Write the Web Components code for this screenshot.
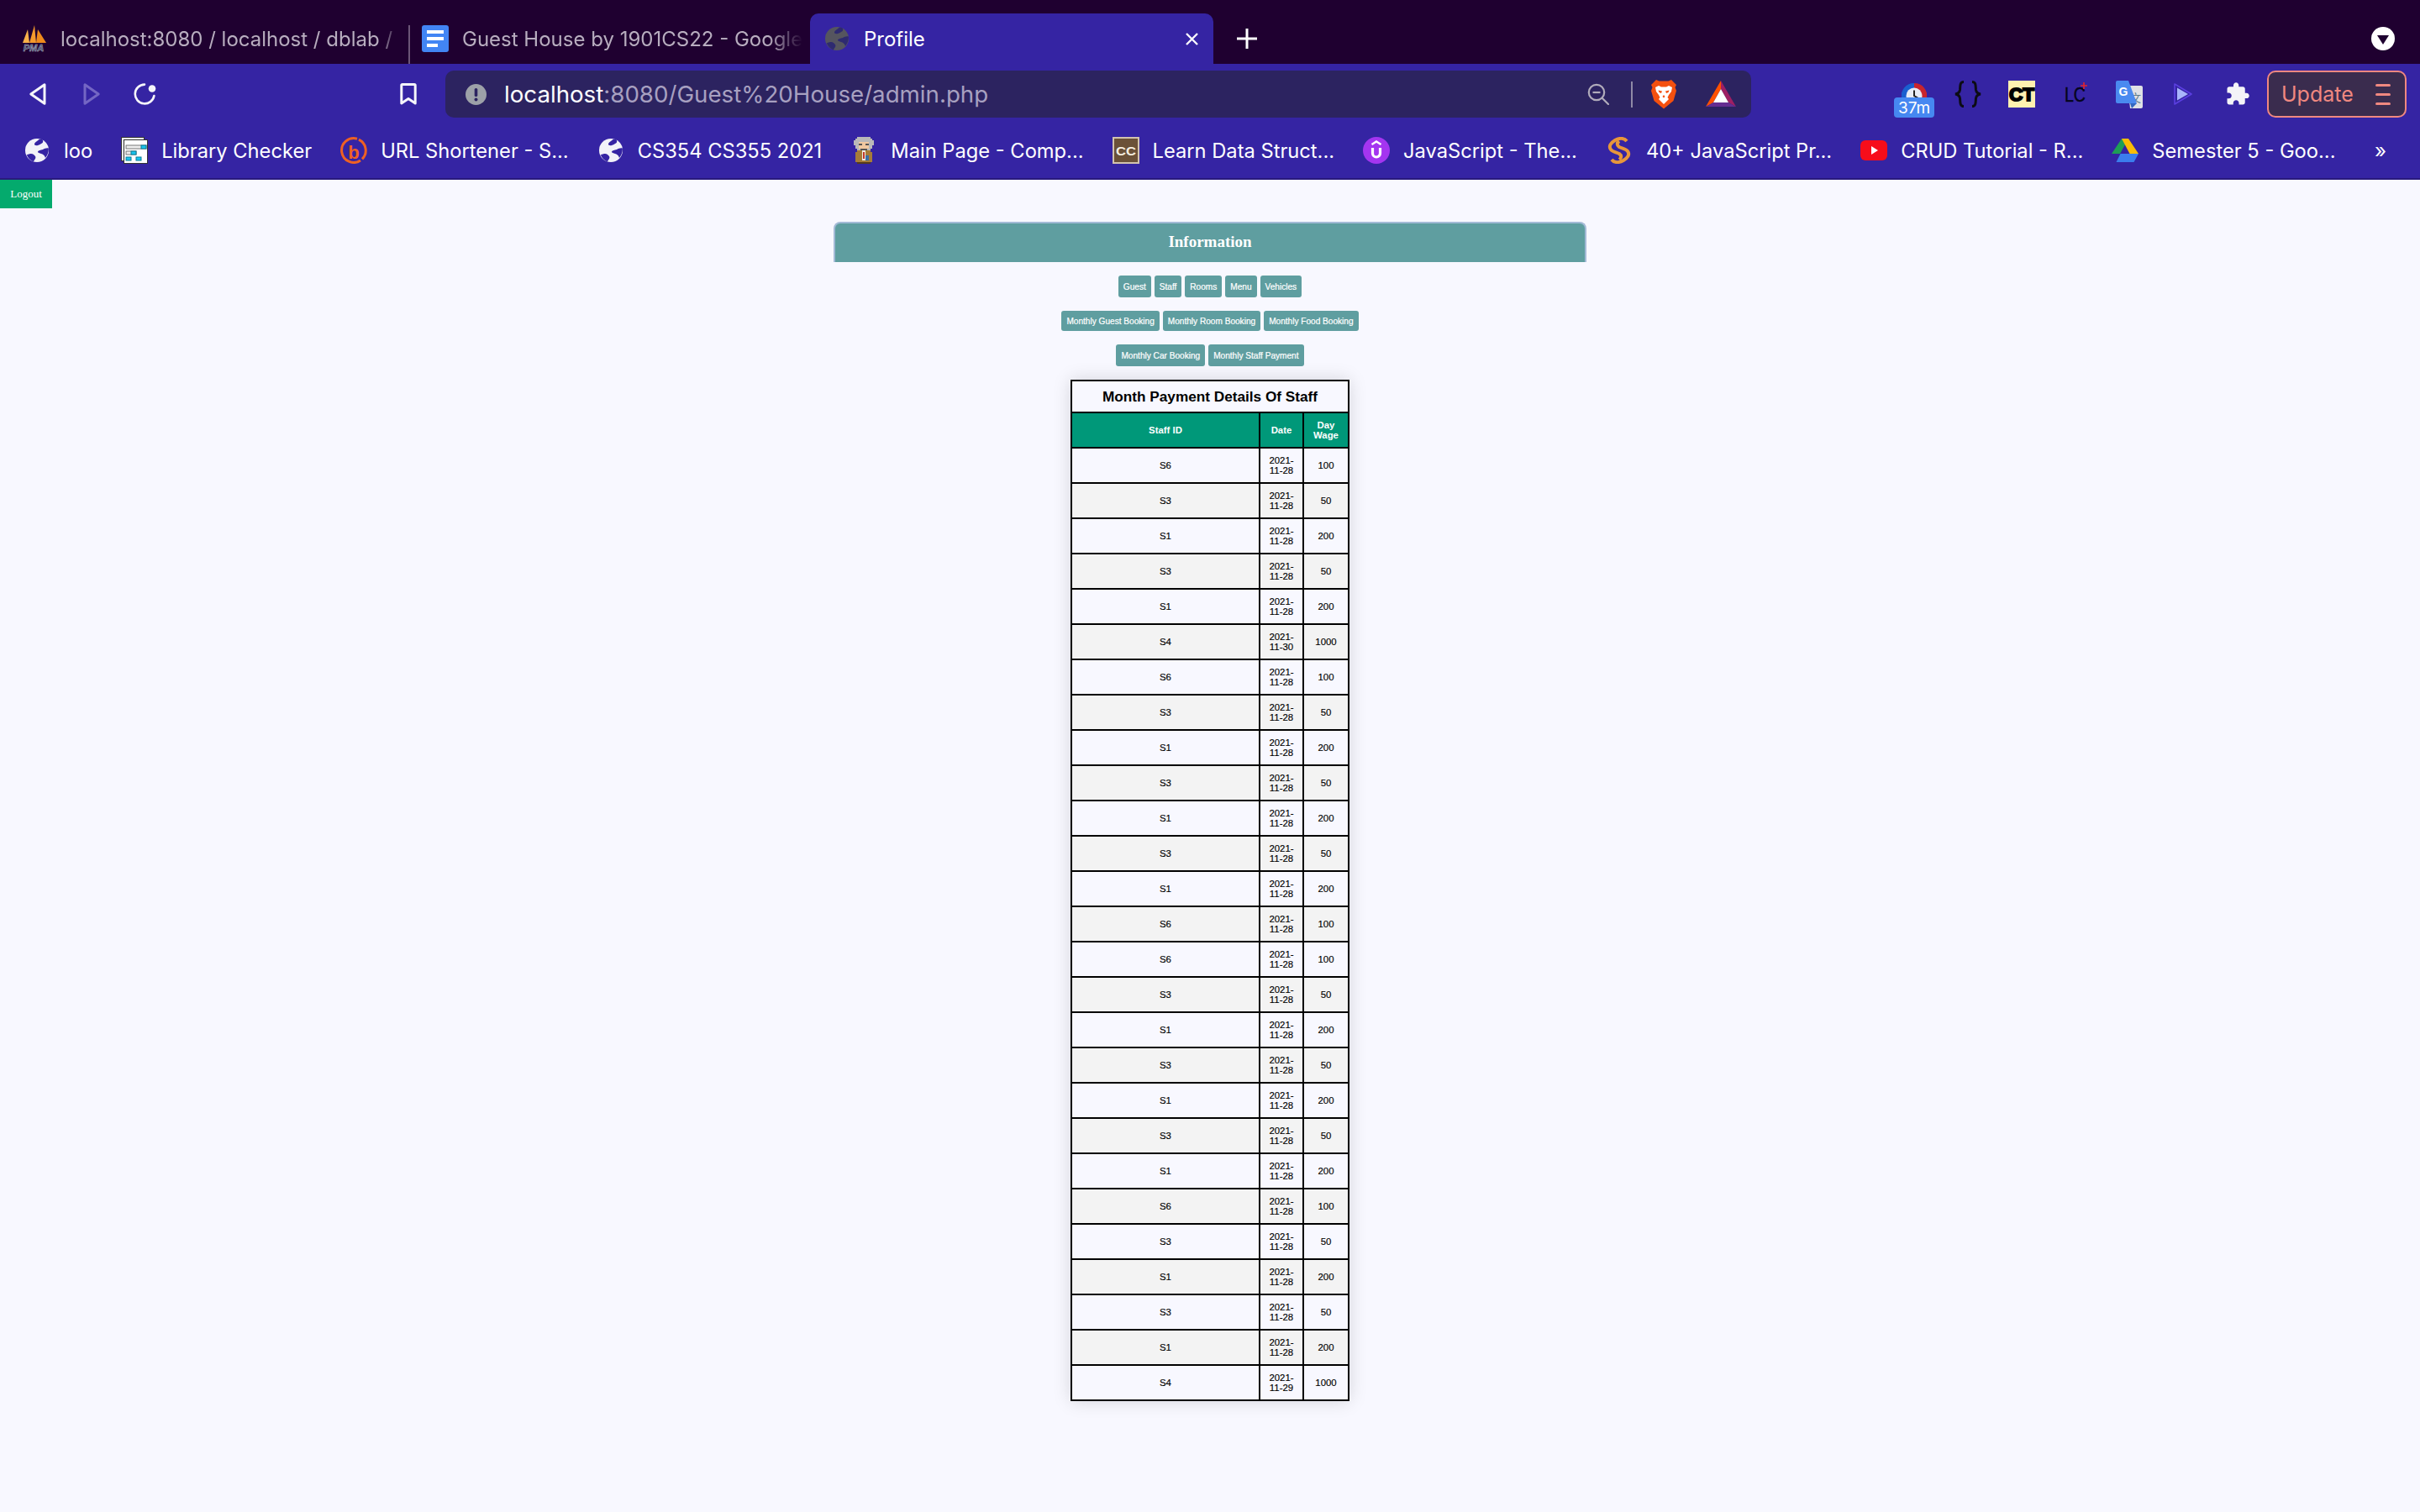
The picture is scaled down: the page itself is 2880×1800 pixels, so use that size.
<!DOCTYPE html>
<html>
<head>
<meta charset="utf-8">
<title>Profile</title>
<style>
  html, body { margin: 0; padding: 0; background: #f8f8ff; font-family: "Liberation Sans", sans-serif; }
  body { height: 1800px; overflow: hidden; }
</style>
</head>
<body>
<browser-chrome></browser-chrome>
<logout-link>Logout</logout-link>
<admin-panel>
  <info-header>Information</info-header>
  <nav-row height="26">
    <nav-btn>Guest</nav-btn><nav-btn>Staff</nav-btn><nav-btn>Rooms</nav-btn><nav-btn>Menu</nav-btn><nav-btn>Vehicles</nav-btn>
  </nav-row>
  <nav-row height="24">
    <nav-btn>Monthly Guest Booking</nav-btn><nav-btn>Monthly Room Booking</nav-btn><nav-btn>Monthly Food Booking</nav-btn>
  </nav-row>
  <nav-row height="26">
    <nav-btn>Monthly Car Booking</nav-btn><nav-btn>Monthly Staff Payment</nav-btn>
  </nav-row>
  <payment-table></payment-table>
</admin-panel>

<script>
const globe = (fill, dark, size = 28) => `
  <svg width="${size}" height="${size}" viewBox="0 0 28 28">
    <circle cx="14" cy="14" r="14" fill="${fill}"/>
    <path d="M17 .5C15 3 12 3.5 11 6C10.5 8 13 8.5 15 8C17 7.5 18 6.5 20 5.5C21.5 4.5 21.5 2.5 20.5 1.2C19.5 .9 18 .6 17 .5Z" fill="${dark}"/>
    <path d="M27.8 11.5C25 11 23 12 21 13C18 14 16 13.5 15 15.5C14.5 17 17 17.5 19 18C21 18.5 23 19.5 24 23C26.5 20 28.3 15.5 27.8 11.5Z" fill="${dark}"/>
    <path d="M1.8 19.5C5 18 8 17.5 10 19C12 20.5 13 22 12 24C11 25.5 10 26.5 10 27.4C6.5 26.2 3.5 23.5 1.8 19.5Z" fill="${dark}"/>
  </svg>`;

const icons = {
  pma: `<svg width="32" height="32" viewBox="0 0 32 32">
    <path d="M3 21L9 5L11 21Z" fill="#f9b24a"/><path d="M11 21L17 0L19 21Z" fill="#f59a2c"/><path d="M19 21L21 5L31 21Z" fill="#ef8a1c"/>
    <text x="16" y="31" text-anchor="middle" font-family="Liberation Sans" font-style="italic" font-weight="700" font-size="11" fill="#34405f" stroke="#b9bccb" stroke-width=".5">PMA</text>
  </svg>`,
  docs: `<svg width="32" height="32" viewBox="0 0 32 32">
    <rect width="32" height="32" rx="3" fill="#4285f4"/>
    <rect x="6" y="6" width="20" height="4" fill="#fff"/><rect x="6" y="14" width="20" height="4" fill="#fff"/><rect x="6" y="22" width="13" height="4" fill="#fff"/>
  </svg>`,
  back: `<svg width="20" height="26" viewBox="0 0 20 26"><path d="M18 1.8V24.2L1.8 13Z" fill="none" stroke="#f5f5fa" stroke-width="3" stroke-linejoin="round"/></svg>`,
  forward: `<svg width="20" height="26" viewBox="0 0 20 26"><path d="M2 1.8V24.2L18.2 13Z" fill="none" stroke="#7466c4" stroke-width="3" stroke-linejoin="round"/></svg>`,
  reload: `<svg width="27" height="26" viewBox="0 0 27 26"><path d="M13 1.6A11.4 11.4 0 1 0 24.4 15" fill="none" stroke="#f5f5fa" stroke-width="2.6" stroke-linecap="round"/><circle cx="22" cy="6.5" r="4.3" fill="#f5f5fa"/></svg>`,
  bookmark: `<svg width="20" height="26" viewBox="0 0 20 26"><path d="M1.8 2.5Q1.8 1.5 3 1.5H17Q18.2 1.5 18.2 2.5V24L10 18.5L1.8 24Z" fill="none" stroke="#f5f5fa" stroke-width="3" stroke-linejoin="round"/></svg>`,
  info: `<svg width="25" height="25" viewBox="0 0 25 25"><circle cx="12.5" cy="12.5" r="12.5" fill="#9da1a8"/><rect x="10.7" y="5" width="3.6" height="10" rx="1.6" fill="#2c2360"/><circle cx="12.5" cy="18.5" r="2" fill="#2c2360"/></svg>`,
  zoom: `<svg width="26" height="26" viewBox="0 0 26 26" fill="none" stroke="#b1acbb" stroke-width="2.2"><circle cx="11" cy="11" r="9.2"/><path d="M6.5 11H15.5"/><path d="M17.5 17.5L25 25" stroke-linecap="round"/></svg>`,
  brave: `<svg width="32" height="36" viewBox="0 0 32 36">
    <path d="M7 1L10.5 2.5H21.5L25 1L31 7L29.5 10L31 14L27.5 26L19 33L16 35.5L13 33L4.5 26L1 14L2.5 10L1 7Z" fill="#f4500f"/>
    <path d="M6 10L10 8L13 9.5H19L22 8L26 10L25 15L22 19L20.5 22L22 24L16 30L10 24L11.5 22L10 19L7 15Z" fill="#fff"/>
    <path d="M9.5 13.5L14 14.5L13 17L10.5 16ZM22.5 13.5L18 14.5L19 17L21.5 16ZM14.5 21L16 19L17.5 21L16 22.5Z" fill="#f4500f"/>
  </svg>`,
  bat: `<svg width="36" height="32" viewBox="0 0 36 32">
    <path d="M18 0L0 31L9 26L18 10Z" fill="#ff5000"/><path d="M18 0L36 31L27 26L18 10Z" fill="#9e1f63"/>
    <path d="M0 31L36 31L27 26H9Z" fill="#662d91"/><path d="M18 10L27 26H9Z" fill="#fff"/>
  </svg>`,
  timer: `<svg width="30" height="18" viewBox="0 0 30 18">
    <path d="M0 18A15 15 0 0 1 15 0V18Z" fill="#1a5fd0"/><path d="M30 18A15 15 0 0 0 15 0V18Z" fill="#c9252d"/>
    <circle cx="15" cy="15" r="9.5" fill="#e8ecf6"/><path d="M15 8.5V15L20 18" fill="none" stroke="#222" stroke-width="2"/>
  </svg>`,
  braces: `<svg width="32" height="32" viewBox="0 0 32 32" fill="none" stroke="#0c0c14" stroke-width="3">
    <path d="M11 1.5C6 1.5 7 7 6.5 11C6 14 4 15.5 1 16C4 16.5 6 18 6.5 21C7 25 6 30.5 11 30.5"/>
    <path d="M21 1.5C26 1.5 25 7 25.5 11C26 14 28 15.5 31 16C28 16.5 26 18 25.5 21C25 25 26 30.5 21 30.5"/>
  </svg>`,
  ct: `<svg width="32" height="32" viewBox="0 0 32 32">
    <rect width="32" height="32" fill="#fff1b0"/>
    <text x="1" y="24" font-family="Liberation Sans" font-weight="700" font-size="22" fill="#000" stroke="#000" stroke-width="2" textLength="30" lengthAdjust="spacingAndGlyphs">CT</text>
  </svg>`,
  lc: `<svg width="32" height="30" viewBox="0 0 32 30">
    <text x="0" y="24" font-family="Liberation Sans" font-size="24" fill="#05051c" stroke="#05051c" stroke-width=".5" textLength="25" lengthAdjust="spacingAndGlyphs">LC</text>
    <path d="M23 1V9M19 5H27" stroke="#e3242b" stroke-width="1.6"/>
  </svg>`,
  translate: `<svg width="32" height="33" viewBox="0 0 32 33">
    <path d="M14 6H30Q32 6 32 8V31Q32 33 30 33H17Z" fill="#dfe1e5"/>
    <text x="23.5" y="25" text-anchor="middle" font-family="Noto Sans CJK SC" font-size="13" fill="#5f7c8a">文</text>
    <path d="M2 0H15L25 27H2Q0 27 0 25V2Q0 0 2 0Z" fill="#4a8af0"/>
    <path d="M17 27H25L19 33Z" fill="#3367c0"/>
    <text x="9" y="18" text-anchor="middle" font-family="Liberation Sans" font-weight="700" font-size="14" fill="#fff">G</text>
  </svg>`,
  play: `<svg width="22" height="26" viewBox="0 0 22 26">
    <path d="M1 1L21 13L1 25Z" fill="none" stroke="#5b3fe0" stroke-width="1.6" stroke-linejoin="round"/>
    <path d="M4 5.5L17 13L4 20.5Z" fill="#a9b6fb"/>
  </svg>`,
  puzzle: `<svg width="30" height="30" viewBox="0 0 24 24"><path d="M20.5 11H19V7c0-1.1-.9-2-2-2h-4V3.5C13 2.12 11.88 1 10.5 1S8 2.12 8 3.5V5H4c-1.1 0-1.99.9-1.99 2v3.8H3.5c1.49 0 2.7 1.21 2.7 2.7s-1.21 2.7-2.7 2.7H2V20c0 1.1.9 2 2 2h3.8v-1.5c0-1.49 1.21-2.7 2.7-2.7 1.49 0 2.7 1.21 2.7 2.7V22H17c1.1 0 2-.9 2-2v-4h1.5c1.38 0 2.5-1.12 2.5-2.5S21.88 11 20.5 11z" fill="#f4f4f8"/></svg>`,
  tabs: `<svg width="28" height="28" viewBox="0 0 28 28"><circle cx="14" cy="14" r="14" fill="#fff"/><path d="M7 10H21L14 21Z" fill="#1f0030"/></svg>`,
  library: `<svg width="32" height="32" viewBox="0 0 32 32">
    <rect x="0.5" y="0.5" width="27" height="28" fill="#ececec" stroke="#333"/>
    <rect x="3.5" y="3.5" width="28" height="28" fill="#fff" stroke="#333"/>
    <rect x="6" y="10" width="24" height="4" fill="#eee" stroke="#777"/><rect x="24" y="10" width="6" height="4" fill="#18c4ee" stroke="#0b7d96"/>
    <rect x="6" y="17" width="12" height="4" fill="#eee" stroke="#777"/><rect x="12" y="17" width="6" height="4" fill="#18c4ee" stroke="#0b7d96"/>
    <rect x="6" y="24" width="6" height="4" fill="#18c4ee" stroke="#0b7d96"/><rect x="18" y="24" width="6" height="4" fill="#18c4ee" stroke="#0b7d96"/>
  </svg>`,
  bitly: `<svg width="32" height="32" viewBox="0 0 32 32">
    <path d="M20 2.2A14.4 14.4 0 1 0 24 28" fill="none" stroke="#ee6123" stroke-width="3"/><path d="M22 3.2A14.4 14.4 0 0 1 26 26.4" fill="none" stroke="#ee6123" stroke-width="3"/>
    <text x="16" y="26" text-anchor="middle" font-family="Liberation Sans" font-weight="700" font-size="22" fill="#ee6123">b</text>
  </svg>`,
  einstein: `<svg width="24" height="32" viewBox="2 0 12 16" shape-rendering="crispEdges">
    <path d="M4 0H12V1H13V2H14V5H13V7H12V8H4V7H3V5H2V2H3V1H4Z" fill="#b9b9b9"/>
    <path d="M5 3H11V7H10V8H6V7H5Z" fill="#f0c8a0"/>
    <path d="M5 4H7V5H5ZM9 4H11V5H9ZM6 7H10V8H6Z" fill="#555"/>
    <path d="M4 8H12V9H13V15H3V9H4Z" fill="#a67c38"/>
    <path d="M7 8H9V14H7Z" fill="#f1ece2"/><path d="M7.5 9H8.5V13H7.5Z" fill="#c0392b"/>
    <path d="M9 11H11V14H9Z" fill="#3a6ea5"/>
    <path d="M4 15H12V16H4Z" fill="#553a1b"/>
  </svg>`,
  cc: `<svg width="32" height="32" viewBox="0 0 32 32">
    <rect x="1" y="1" width="30" height="30" fill="#6b5138" stroke="#d2c3ae" stroke-width="2"/>
    <text x="16" y="21.5" text-anchor="middle" font-family="Liberation Sans" font-weight="700" font-size="14.5" fill="#f5eee0" textLength="24" lengthAdjust="spacingAndGlyphs">CC</text>
  </svg>`,
  udemy: `<svg width="32" height="32" viewBox="0 0 32 32">
    <circle cx="16" cy="16" r="16" fill="#a435f0"/>
    <path d="M10.5 9L16 5.5L21.5 9" fill="none" stroke="#fff" stroke-width="2.4"/>
    <path d="M11.5 13V19.5A4.5 4.5 0 0 0 20.5 19.5V13" fill="none" stroke="#fff" stroke-width="3.2"/>
  </svg>`,
  swirl: `<svg width="32" height="32" viewBox="0 0 32 32" fill="none" stroke="#e8963a" stroke-width="4">
    <path d="M25 5C22 1 16 1 11 4C6 7 3 11 6 15C8 18 12 18 16 20C19 22 19 25 16 27"/>
    <path d="M7 27C10 31 16 31 21 28C26 25 29 21 26 17C24 14 20 14 16 12C13 10 13 7 16 5"/>
  </svg>`,
  youtube: `<svg width="32" height="32" viewBox="0 0 32 32"><rect x="0" y="4" width="32" height="24" rx="6" fill="#f70d1a"/><path d="M13 11L21 16L13 21Z" fill="#fff"/></svg>`,
  drive: `<svg width="32" height="32" viewBox="0 0 32 32">
    <path d="M12 2H20L10 20H0Z" fill="#1e9e56"/><path d="M12 2H20L32 20H21.5Z" fill="#fbbc04"/>
    <path d="M10.5 20H32L26.5 30H5.5Z" fill="#3b7ded"/>
  </svg>`
};

const tabStyles = `
  svg { display: block; }
  .tabs { display: flex; align-items: flex-end; height: 76px; background: #1f0030; position: relative; }
  .tab { display: flex; align-items: center; height: 60px; box-sizing: border-box; font-size: 24px; white-space: nowrap; overflow: hidden; }
  .tab svg { flex: none; }
  .tab span { display: block; flex: none; margin-left: 16px; color: #b8adbf; -webkit-mask-image: linear-gradient(to right, #000 90%, transparent); mask-image: linear-gradient(to right, #000 90%, transparent); }
  .t1 { width: 486px; padding-left: 24px; }
  .tab.t1 span { -webkit-mask-image: linear-gradient(to right, #000 96%, rgb(0 0 0 / 35%)); mask-image: linear-gradient(to right, #000 96%, rgb(0 0 0 / 35%)); }
  .sep { width: 2px; height: 46px; background: #6b5577; flex: none; }
  .t2 { width: 476px; padding-left: 14px; }
  .tab.active { width: 480px; padding-left: 18px; background: #3524a3; border-radius: 10px 10px 0 0; }
  .tab.active span { flex: 1; color: #fff; margin-left: 18px; -webkit-mask-image: none; mask-image: none; }
  .close { width: 15px; margin-right: 18px; flex: none; }
  .plus { margin: 0 0 7px 28px; align-self: flex-end; width: 24px; height: 46px; display: flex; align-items: center; }
  .tabs-btn { margin-left: auto; margin-right: 30px; align-self: center; display: flex; margin-top: 16px; }
`;

const toolbarStyles = `
  .toolbar { display: flex; align-items: center; height: 64px; box-sizing: border-box; padding-top: 8px; background: #3524a3; }
  .toolbar > *, .addr > * { flex: none; display: block; }
  .addr { display: flex; align-items: center; width: 1554px; height: 56px; box-sizing: border-box; padding: 0 18px 0 24px; background: #2c2360; border-radius: 10px; }
  .url { font-size: 27.7px; margin-left: 21px; color: #a7a0c0; white-space: nowrap; }
  .url b { font-weight: 400; color: #fff; }
  .divider { width: 2px; height: 31px; background: #8f8aa6; }
  .timer { display: flex; flex-direction: column; align-items: center; width: 48px; align-self: flex-end; }
  .badge { width: 48px; height: 24px; margin-top: -1px; background: #4688f1; border-radius: 4px; color: #fff; font-size: 19px; line-height: 25px; text-align: center; }
  .update { display: flex; align-items: center; width: 166px; height: 56px; box-sizing: border-box; padding-left: 15px; border: 2px solid #f08880; border-radius: 10px; background: #3a2c4e; color: #f08880; font-size: 25px; }
  .burger { margin-left: auto; margin-right: 17px; width: 18px; display: flex; flex-direction: column; gap: 8px; }
  .burger i { display: block; height: 3px; background: #f08880; border-radius: 2px; }
`;

const bookmarkStyles = `
  .bookmarks { display: flex; align-items: center; height: 74px; box-sizing: border-box; padding: 8px 0 2px 28px; gap: 34px; background: #3524a3; border-bottom: 2px solid #291a7c; }
  .bm { display: flex; align-items: center; gap: 16px; color: #fff; font-size: 23.7px; white-space: nowrap; }
  .bm .ico { width: 32px; height: 32px; display: flex; align-items: center; justify-content: center; }
  .more { position: absolute; left: 2826px; color: #fff; font-size: 24px; }
`;

const bookmarks = [
  [globe('#f2f2f8', '#3524a3'), 'loo'],
  [icons.library, 'Library Checker'],
  [icons.bitly, 'URL Shortener - S...'],
  [globe('#f2f2f8', '#3524a3'), 'CS354 CS355 2021'],
  [icons.einstein, 'Main Page - Comp...'],
  [icons.cc, 'Learn Data Struct...'],
  [icons.udemy, 'JavaScript - The...'],
  [icons.swirl, '40+ JavaScript Pr...'],
  [icons.youtube, 'CRUD Tutorial - R...'],
  [icons.drive, 'Semester 5 - Goo...']
];

class BrowserChrome extends HTMLElement {
  constructor() {
    super();
    this.attachShadow({mode: 'open'});
  }

  connectedCallback() {
    this.shadowRoot.innerHTML = `
      <style>
        :host { display: block; font-family: "Inter", "Liberation Sans", sans-serif; position: relative; }
        ${tabStyles}
        ${toolbarStyles}
        ${bookmarkStyles}
      </style>
      <div class="tabs">
        <div class="tab t1">${icons.pma}<span>localhost:8080 / localhost / dblab /</span></div>
        <div class="sep"></div>
        <div class="tab t2">${icons.docs}<span>Guest House by 1901CS22 - Google</span></div>
        <div class="tab active">${globe('#55555f', '#2e2a70')}<span>Profile</span><div class="close"><svg width="15" height="15" viewBox="0 0 15 15"><path d="M1 1L14 14M14 1L1 14" stroke="#fff" stroke-width="2.4"/></svg></div></div>
        <div class="plus"><svg width="24" height="24" viewBox="0 0 24 24"><path d="M12 0V24M0 12H24" stroke="#fff" stroke-width="3"/></svg></div>
        <div class="tabs-btn">${icons.tabs}</div>
      </div>
      <div class="toolbar">
        <div style="margin-left:35px">${icons.back}</div>
        <div style="margin-left:44px">${icons.forward}</div>
        <div style="margin-left:40px">${icons.reload}</div>
        <div style="margin-left:290px">${icons.bookmark}</div>
        <div class="addr" style="margin-left:34px">
          <div>${icons.info}</div>
          <div class="url"><b>localhost</b>:8080/Guest%20House/admin.php</div>
          <div style="margin-left:auto">${icons.zoom}</div>
          <div class="divider" style="margin-left:26px"></div>
          <div style="margin-left:21px">${icons.brave}</div>
          <div style="margin-left:34px">${icons.bat}</div>
        </div>
        <div class="timer" style="margin-left:170px">${icons.timer}<div class="badge">37m</div></div>
        <div style="margin-left:24px">${icons.braces}</div>
        <div style="margin-left:32px">${icons.ct}</div>
        <div style="margin-left:35px">${icons.lc}</div>
        <div style="margin-left:29px">${icons.translate}</div>
        <div style="margin-left:37px">${icons.play}</div>
        <div style="margin-left:39px">${icons.puzzle}</div>
        <div class="update" style="margin-left:20px">Update<div class="burger"><i></i><i></i><i></i></div></div>
      </div>
      <div class="bookmarks">
        ${bookmarks.map(([ico, label]) => `<div class="bm"><div class="ico">${ico}</div><div>${label}</div></div>`).join('')}
        <div class="more">»</div>
      </div>
    `;
  }
}

class LogoutLink extends HTMLElement {
  constructor() {
    super();
    this.attachShadow({mode: 'open'}).innerHTML = `
      <style>
        :host { display: flex; align-items: center; justify-content: center; width: 62px; height: 34px; background: #04aa6d; color: #fff; font: 13px "Liberation Serif", serif; }
      </style>
      <slot></slot>
    `;
  }
}

class AdminPanel extends HTMLElement {
  constructor() {
    super();
    this.attachShadow({mode: 'open'}).innerHTML = `
      <style>
        :host { display: flex; flex-direction: column; align-items: center; gap: 16px; width: 896px; margin: 16px auto 0; }
      </style>
      <slot></slot>
    `;
  }
}

class InfoHeader extends HTMLElement {
  constructor() {
    super();
    this.attachShadow({mode: 'open'}).innerHTML = `
      <style>
        :host { display: flex; align-items: center; justify-content: center; align-self: stretch; height: 48px; box-sizing: border-box; padding-bottom: 2px; background: #5f9ea0; border: 2px solid #a3bad6; border-bottom: 0; border-radius: 8px 8px 0 0; color: #fff; font: bold 19px "Liberation Serif", serif; }
      </style>
      <slot></slot>
    `;
  }
}

class NavRow extends HTMLElement {
  constructor() {
    super();
    this.attachShadow({mode: 'open'}).innerHTML = `
      <style>
        :host { display: flex; justify-content: center; gap: 4px; }
      </style>
      <slot></slot>
    `;
  }

  connectedCallback() {
    this.style.height = this.getAttribute('height') + 'px';
  }
}

class NavBtn extends HTMLElement {
  constructor() {
    super();
    this.attachShadow({mode: 'open'}).innerHTML = `
      <style>
        :host { display: flex; align-items: center; padding: 0 6px; background: #5f9ea0; border-radius: 3px; color: #fff; font: 10.1px "Liberation Sans", sans-serif; -webkit-text-stroke: .2px #fff; white-space: nowrap; }
      </style>
      <slot></slot>
    `;
  }
}

const payments = [
  ['S6', '2021-11-28', 100], ['S3', '2021-11-28', 50], ['S1', '2021-11-28', 200], ['S3', '2021-11-28', 50],
  ['S1', '2021-11-28', 200], ['S4', '2021-11-30', 1000], ['S6', '2021-11-28', 100], ['S3', '2021-11-28', 50],
  ['S1', '2021-11-28', 200], ['S3', '2021-11-28', 50], ['S1', '2021-11-28', 200], ['S3', '2021-11-28', 50],
  ['S1', '2021-11-28', 200], ['S6', '2021-11-28', 100], ['S6', '2021-11-28', 100], ['S3', '2021-11-28', 50],
  ['S1', '2021-11-28', 200], ['S3', '2021-11-28', 50], ['S1', '2021-11-28', 200], ['S3', '2021-11-28', 50],
  ['S1', '2021-11-28', 200], ['S6', '2021-11-28', 100], ['S3', '2021-11-28', 50], ['S1', '2021-11-28', 200],
  ['S3', '2021-11-28', 50], ['S1', '2021-11-28', 200], ['S4', '2021-11-29', 1000]
];

class PaymentTable extends HTMLElement {
  constructor() {
    super();
    this.attachShadow({mode: 'open'});
  }

  connectedCallback() {
    this.shadowRoot.innerHTML = `
      <style>
        :host { display: block; box-shadow: 0 0 20px rgb(0 0 0 / 15%); }
        table { display: table; border-collapse: separate; border-spacing: 0; table-layout: fixed; width: 332px; box-sizing: border-box; border: solid #000; border-width: 2px 0 0 2px; font: 11.4px/12px "Liberation Sans", sans-serif; color: #000; -webkit-text-stroke: .15px #000; }
        td, th { box-sizing: border-box; height: 42px; padding: 0 4px; border: solid #000; border-width: 0 2px 2px 0; text-align: center; }
        th { -webkit-text-stroke: 0; }
        .caption { height: 38px; font-size: 17.2px; font-weight: bold; }
        thead tr + tr th { background: #009879; color: #fff; }
        tbody tr:nth-child(even) { background: #f3f3f3; }
      </style>
      <table>
        <colgroup><col style="width:224px"><col style="width:52px"><col style="width:54px"></colgroup>
        <thead>
          <tr><th class="caption" colspan="3">Month Payment Details Of Staff</th></tr>
          <tr><th>Staff ID</th><th>Date</th><th>Day Wage</th></tr>
        </thead>
        <tbody>
          ${payments.map(([id, date, wage]) => `<tr><td>${id}</td><td>${date}</td><td>${wage}</td></tr>`).join('')}
        </tbody>
      </table>
    `;
  }
}

customElements.define('browser-chrome', BrowserChrome);
customElements.define('logout-link', LogoutLink);
customElements.define('admin-panel', AdminPanel);
customElements.define('info-header', InfoHeader);
customElements.define('nav-row', NavRow);
customElements.define('nav-btn', NavBtn);
customElements.define('payment-table', PaymentTable);
</script>
</body>
</html>
